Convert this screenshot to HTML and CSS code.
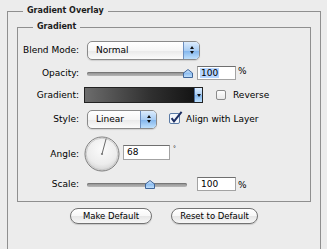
FILE: index.html
```html
<!DOCTYPE html>
<html lang="en">
<head>
    <meta charset="UTF-8">
    <title>Gradient Overlay</title>
    <link rel="stylesheet" href="styles.css">
</head>
<body>
    <fieldset class="panel">
        <legend class="panel-title">Gradient Overlay</legend>
        <fieldset class="group">
            <legend class="group-title">Gradient</legend>

            <div class="row row-blend">
                <span class="label">Blend Mode:</span>
                <div class="popup popup-wide">
                    <span class="popup-text">Normal</span>
                    <span class="popup-cap"><i class="up"></i><i class="down"></i></span>
                </div>
            </div>

            <div class="row row-opacity">
                <span class="label">Opacity:</span>
                <div class="slider">
                    <div class="track"></div>
                    <svg class="thumb" style="left: 96px" width="10" height="9" viewBox="0 0 10 9">
                        <defs>
                            <linearGradient id="aq1" x1="0" y1="0" x2="0" y2="1">
                                <stop offset="0" stop-color="#d9ebfd"/>
                                <stop offset="0.5" stop-color="#8fbef0"/>
                                <stop offset="1" stop-color="#c4e2fc"/>
                            </linearGradient>
                        </defs>
                        <polygon points="0.5,8.5 0.5,4 5,0.5 9.5,4 9.5,8.5" fill="url(#aq1)" stroke="#41669a"/>
                    </svg>
                </div>
                <span class="field field-selected"><span class="sel">100</span></span>
                <span class="unit">%</span>
            </div>

            <div class="row row-gradient">
                <span class="label">Gradient:</span>
                <div class="swatch">
                    <span class="swatch-fill"></span>
                    <span class="swatch-cap"><i class="down"></i></span>
                </div>
                <span class="check"></span>
                <span class="check-text">Reverse</span>
            </div>

            <div class="row row-style">
                <span class="label">Style:</span>
                <div class="popup popup-short">
                    <span class="popup-text">Linear</span>
                    <span class="popup-cap"><i class="up"></i><i class="down"></i></span>
                </div>
                <svg class="check-on" width="14" height="14" viewBox="0 0 14 14">
                    <rect x="0.5" y="2.5" width="10" height="10" rx="1.5" fill="#f4f7fb" stroke="#5a7aa5"/>
                    <path d="M2.6 7.2 L5 10.4 L12.6 0.8" fill="none" stroke="#1d2f63" stroke-width="2"/>
                </svg>
                <span class="check-text">Align with Layer</span>
            </div>

            <div class="row row-angle">
                <span class="label">Angle:</span>
                <svg class="dial" width="36" height="36" viewBox="0 0 36 36">
                    <defs>
                        <radialGradient id="dialFill" cx="0.5" cy="0.35" r="0.65">
                            <stop offset="0" stop-color="#fbfbfb"/>
                            <stop offset="0.7" stop-color="#ececec"/>
                            <stop offset="1" stop-color="#d2d2d2"/>
                        </radialGradient>
                    </defs>
                    <circle cx="18" cy="18" r="17" fill="url(#dialFill)" stroke="#7d7d7d"/>
                    <circle cx="18" cy="18" r="15.8" fill="none" stroke="#c4c4c4" stroke-width="0.8"/>
                    <line x1="18" y1="18" x2="22.2" y2="2.4" stroke="#6a6a6a" stroke-width="1"/>
                    <circle cx="18" cy="18" r="1.1" fill="#777"/>
                </svg>
                <span class="field field-angle">68</span>
                <span class="degree">°</span>
            </div>

            <div class="row row-scale">
                <span class="label">Scale:</span>
                <div class="slider">
                    <div class="track"></div>
                    <svg class="thumb" style="left: 58px" width="10" height="9" viewBox="0 0 10 9">
                        <defs>
                            <linearGradient id="aq2" x1="0" y1="0" x2="0" y2="1">
                                <stop offset="0" stop-color="#d9ebfd"/>
                                <stop offset="0.5" stop-color="#8fbef0"/>
                                <stop offset="1" stop-color="#c4e2fc"/>
                            </linearGradient>
                        </defs>
                        <polygon points="0.5,8.5 0.5,4 5,0.5 9.5,4 9.5,8.5" fill="url(#aq2)" stroke="#41669a"/>
                    </svg>
                </div>
                <span class="field">100</span>
                <span class="unit">%</span>
            </div>
        </fieldset>

        <div class="actions">
            <button type="button" class="btn btn-make">Make Default</button>
            <button type="button" class="btn btn-reset">Reset to Default</button>
        </div>
    </fieldset>
</body>
</html>
```

FILE: styles.css
```css
html, body {
    height: 100%;
    overflow: hidden;
}

body {
    margin: 0;
    background-color: #ececec;
    font-family: "DejaVu Sans", sans-serif;
    font-size: 9px;
    color: #000;
}

.panel {
    width: 314px;
    box-sizing: border-box;
    margin: 5px 0 0 7px;
    padding: 4px 9px 60px;
    border: 1px solid #8f8f8f;
    min-width: 0;
}

.panel-title {
    margin-left: 6px;
    padding: 0 4px;
    font-size: 8px;
    font-weight: bold;
    line-height: 12px;
    color: #1c1c1c;
}

.group {
    margin: 0;
    padding: 7px 0 11px;
    border: 1px solid #8f8f8f;
    min-width: 0;
    display: flex;
    flex-direction: column;
    gap: 4px;
}

.group-title {
    margin-left: 15px;
    padding: 0 4px;
    font-size: 8px;
    font-weight: bold;
    line-height: 12px;
    color: #1c1c1c;
}

.row {
    display: flex;
    align-items: center;
}

.row-blend { height: 20px; }
.row-opacity { height: 18px; }
.row-gradient { height: 18px; }
.row-style { height: 22px; }
.row-angle { height: 40px; }
.row-scale { height: 12px; }

.label {
    width: 61px;
    text-align: right;
    flex-shrink: 0;
}

/* aqua popup menus */
.popup {
    margin-left: 8px;
    height: 19px;
    box-sizing: border-box;
    display: flex;
    border: 1px solid #8a8a8a;
    border-radius: 5px;
    overflow: hidden;
    background: linear-gradient(#ffffff, #f6f6f6 50%, #e9e9e9 51%, #fbfbfb);
    box-shadow: 0 1px 1px rgba(0, 0, 0, 0.12);
}

.popup-wide { width: 113px; }
.popup-short { width: 70px; }

.popup-text {
    flex: 1;
    padding-left: 8px;
    line-height: 17px;
}

.popup-cap {
    width: 15px;
    border-left: 1px solid #6c8fc0;
    background: linear-gradient(#dcecfd, #a9cdf3 50%, #80b4ec 51%, #bfe0fc);
    display: flex;
    flex-direction: column;
    align-items: center;
    justify-content: center;
    gap: 2px;
}

.up, .down {
    display: block;
    width: 0;
    height: 0;
    border-left: 2.5px solid transparent;
    border-right: 2.5px solid transparent;
}

.up { border-bottom: 3px solid #111; }
.down { border-top: 3px solid #111; }

/* sliders */
.slider {
    position: relative;
    margin-left: 8px;
    width: 106px;
    height: 12px;
}

.track {
    position: absolute;
    left: 0;
    top: 5px;
    width: 100px;
    height: 4px;
    border-radius: 2px;
    background: linear-gradient(#8a8a8a, #b8b8b8);
    box-shadow: inset 0 1px 0 #777;
}

.thumb {
    position: absolute;
    top: 2px;
}

/* text fields */
.field {
    margin-left: 4px;
    width: 39px;
    height: 14px;
    box-sizing: border-box;
    background-color: #fff;
    border: 1px solid #a3a3a3;
    border-top-color: #6f6f6f;
    padding-left: 3px;
    line-height: 12px;
}

.sel {
    background-color: #b5d5ff;
    padding: 0 1px;
    margin-left: -1px;
}

.unit {
    margin-left: 2px;
    align-self: flex-start;
    margin-top: 2px;
}

/* gradient swatch */
.swatch {
    margin-left: 5px;
    width: 119px;
    height: 16px;
    display: flex;
    box-sizing: border-box;
    border: 1px solid #222;
}

.swatch-fill {
    flex: 1;
    background: linear-gradient(to right, #6c6c6c, #303030 60%, #141414);
}

.swatch-cap {
    width: 7px;
    border-left: 1px solid #4d6f9f;
    background: linear-gradient(#dcecfd, #a9cdf3 50%, #80b4ec 51%, #bfe0fc);
    display: flex;
    align-items: center;
    justify-content: center;
}

.check {
    margin-left: 13px;
    width: 10px;
    height: 10px;
    box-sizing: border-box;
    border: 1px solid #8a8a8a;
    border-radius: 2px;
    background: linear-gradient(#fdfdfd, #e9e9e9);
}

.check-text {
    margin-left: 7px;
}

.check-on {
    margin-left: 12px;
    margin-top: -3px;
}

.row-style .check-text {
    margin-left: 3px;
}

/* angle */
.dial {
    margin-left: 5px;
}

.field-angle {
    width: 47px;
    height: 15px;
    line-height: 13px;
    margin-left: 3px;
    margin-top: -3px;
}

.degree {
    margin-left: 3px;
    align-self: flex-start;
    margin-top: 10px;
    font-size: 6px;
}

/* buttons */
.actions {
    margin-top: 6px;
    display: flex;
    justify-content: center;
    gap: 19px;
}

.btn {
    height: 16px;
    padding: 0;
    border: 1px solid #727272;
    border-radius: 8px;
    background: linear-gradient(#ffffff, #f7f7f7 50%, #e6e6e6 51%, #f7f7f7);
    font-family: "DejaVu Sans", sans-serif;
    font-size: 8.5px;
    color: #000;
    box-shadow: 0 1px 1px rgba(0, 0, 0, 0.15);
}

.btn-make { width: 82px; }
.btn-reset { width: 87px; }
```
